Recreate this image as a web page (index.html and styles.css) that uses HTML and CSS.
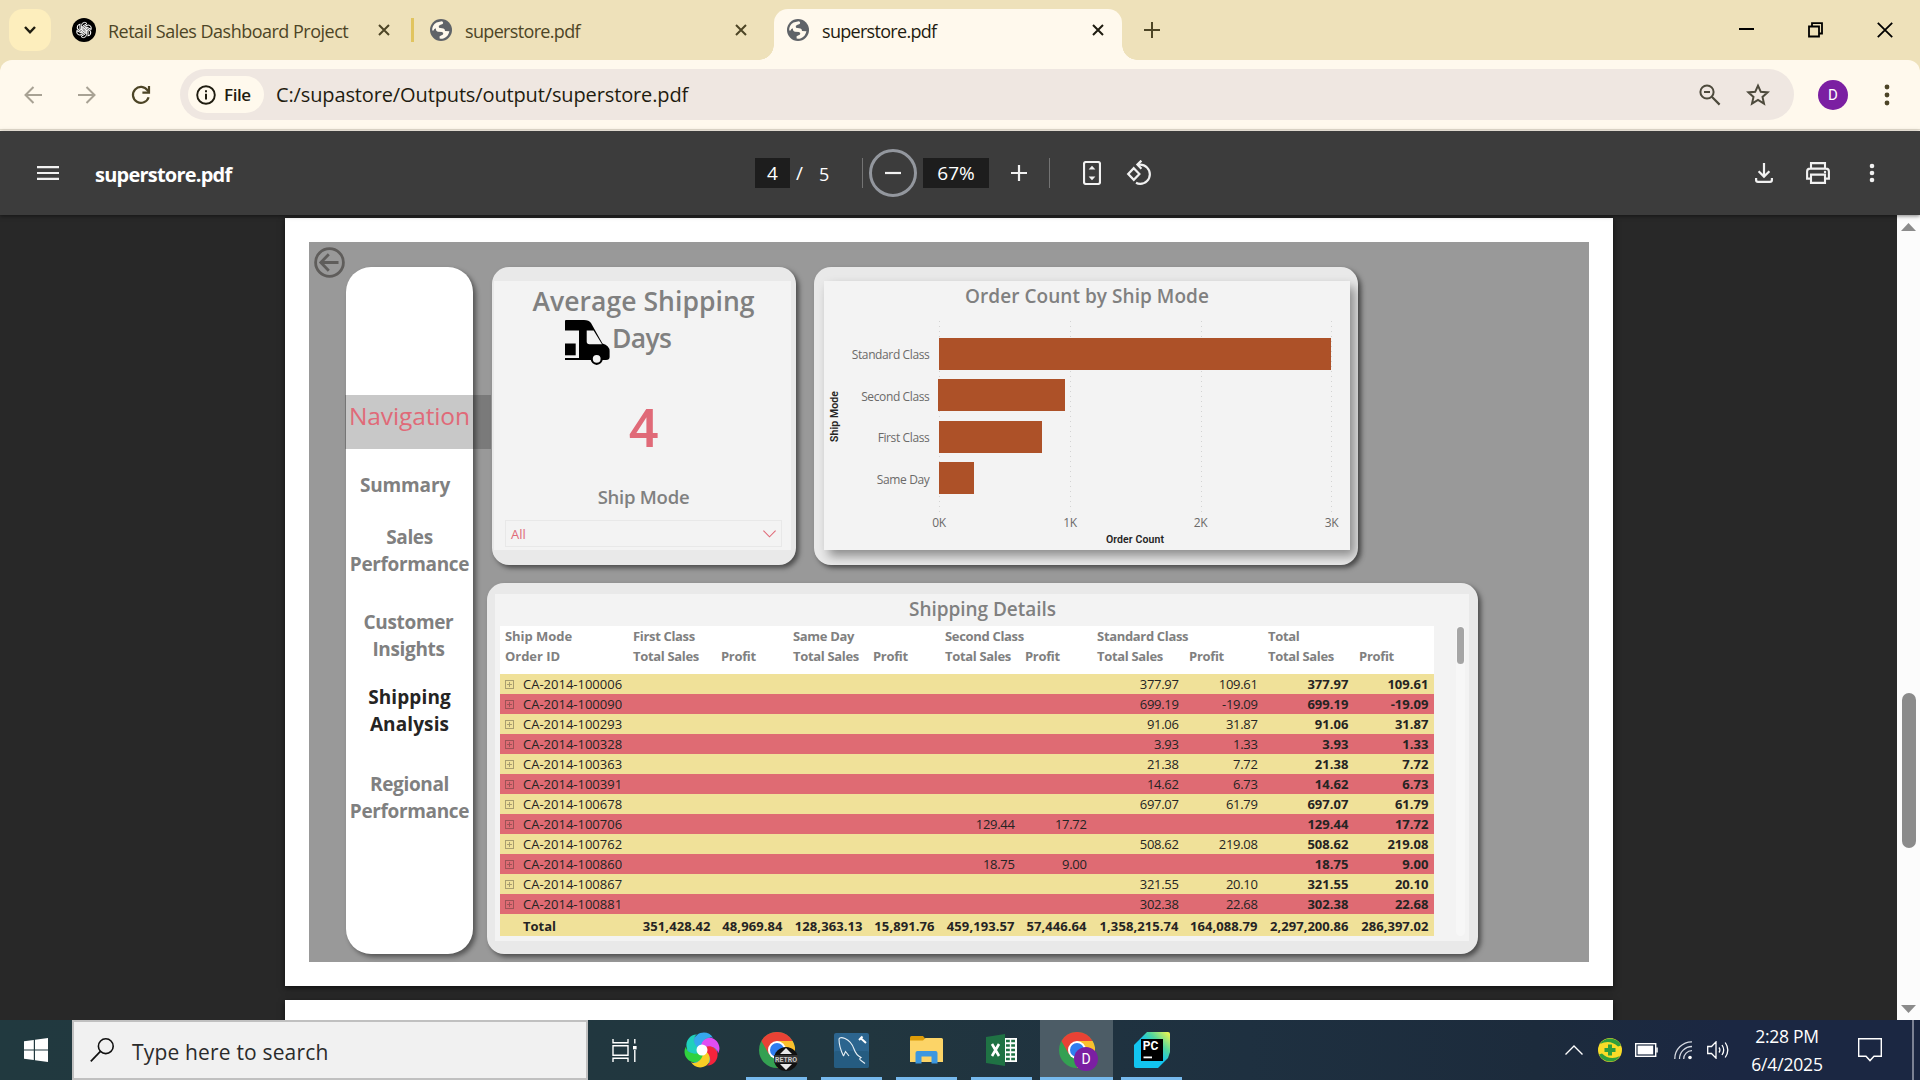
FILE: index.html
```html
<!DOCTYPE html>
<html lang="en">
<head>
<meta charset="utf-8">
<title>superstore.pdf</title>
<link rel="stylesheet" href="styles.css">
</head>
<body>
<svg class="defs" width="0" height="0" aria-hidden="true">
  <defs>
    <symbol id="globe" viewBox="0 0 22 22"><circle cx="11" cy="11" r="11" fill="#5f6368"/><path class="land" d="M2.2 11.6Q1.800 6.500 6.500 3.600L11.800 2.200Q14 3.200 12.600 5L10 6Q8 6.800 9 8.800L13.500 9.400Q15.200 10 15 12L19.400 12.200Q18.600 17 14 19.200Q11.600 20 9.600 19.600V17.200L13 15.600Q14 13.600 12 13L8 12.800Q5.400 12 6 9.600Q4 9.400 3.600 11.600Z"/></symbol>
    <symbol id="chrome" viewBox="0 0 36 36"><circle cx="18" cy="18" r="18" fill="#34a052"/><path d="M18 9H33.6A18 18 0 0 1 18 36L25.8 22.5Z" fill="#fbc02d"/><path d="M2.4 9L10.2 22.5L18 18V9H33.6A18 18 0 0 0 2.4 9Z" fill="#e94235"/><circle cx="18" cy="18" r="9" fill="#fff"/><circle cx="18" cy="18" r="7" fill="#2f7df0"/></symbol>
    <symbol id="close" viewBox="0 0 12 12"><path d="M1 1L11 11M11 1L1 11" stroke="currentColor" stroke-width="2" fill="none"/></symbol>
  </defs>
</svg>

<header class="tabstrip">
  <div class="tab-search"><svg width="14" height="10" viewBox="0 0 14 10"><path d="M2 2L7 7.3L12 2" fill="none" stroke="#1f1c10" stroke-width="2.4"/></svg></div>
  <div class="tab tab-first">
    <svg class="favicon" width="24" height="24" viewBox="0 0 24 24"><circle cx="12" cy="12" r="12" fill="#000"/><g fill="none" stroke="#fff" stroke-width="1"><path id="petal" d="M9.4 12.2V7.6Q9.6 4.6 12.4 4.4Q14 4.4 15 5.6L10.8 8V12.8"/><use href="#petal" transform="rotate(60 12 12)"/><use href="#petal" transform="rotate(120 12 12)"/><use href="#petal" transform="rotate(180 12 12)"/><use href="#petal" transform="rotate(240 12 12)"/><use href="#petal" transform="rotate(300 12 12)"/></g></svg>
    <span class="tab-title">Retail Sales Dashboard Project</span>
    <svg class="tab-close" width="12" height="12"><use href="#close"/></svg>
  </div>
  <div class="tab-divider"></div>
  <div class="tab tab-second">
    <svg class="favicon" width="22" height="22"><use href="#globe"/></svg>
    <span class="tab-title">superstore.pdf</span>
    <svg class="tab-close" width="12" height="12"><use href="#close"/></svg>
  </div>
  <div class="tab tab-active">
    <svg class="favicon" width="22" height="22"><use href="#globe"/></svg>
    <span class="tab-title">superstore.pdf</span>
    <svg class="tab-close" width="12" height="12"><use href="#close"/></svg>
  </div>
  <svg class="new-tab" width="16" height="16" viewBox="0 0 16 16"><path d="M8 0V16M0 8H16" stroke="#4d4526" stroke-width="2"/></svg>
  <div class="window-controls">
    <svg width="15" height="16" viewBox="0 0 15 16"><path d="M0 7H15" stroke="#000" stroke-width="2"/></svg>
    <svg width="15" height="16" viewBox="0 0 15 16"><path d="M1 4.5H11V14.5H1ZM4 4V1.2H14V11.5H11.5" fill="none" stroke="#000" stroke-width="1.8"/></svg>
    <svg width="16" height="16" viewBox="0 0 16 16"><path d="M.8 .8L15.2 15.2M15.2 .8L.8 15.2" stroke="#000" stroke-width="1.8"/></svg>
  </div>
</header>

<nav class="toolbar">
  <svg class="nav-back" width="18" height="18" viewBox="0 0 18 18"><path d="M18 9H1.5M9.5 1L1.5 9L9.5 17" fill="none" stroke="#a8a294" stroke-width="2"/></svg>
  <svg class="nav-forward" width="18" height="18" viewBox="0 0 18 18"><path d="M0 9H16.5M8.5 1L16.5 9L8.5 17" fill="none" stroke="#a8a294" stroke-width="2"/></svg>
  <svg class="nav-reload" width="20" height="20" viewBox="0 0 20 20"><path d="M17.6 12.2A8 8 0 1 1 16.6 5.4L18 7" fill="none" stroke="#4d4526" stroke-width="2.2"/><path d="M18 1V7.6H11.4" fill="none" stroke="#4d4526" stroke-width="2.2"/></svg>
  <div class="omnibox">
    <div class="file-chip">
      <svg width="20" height="20" viewBox="0 0 20 20"><circle cx="10" cy="10" r="8.8" fill="none" stroke="#1f1c10" stroke-width="1.9"/><path d="M10 8.8V14.6M10 5.2V7.2" stroke="#1f1c10" stroke-width="2"/></svg>
      <span>File</span>
    </div>
    <span class="url">C:/supastore/Outputs/output/superstore.pdf</span>
    <svg class="zoom-icon" width="22" height="22" viewBox="0 0 22 22"><circle cx="8" cy="8" r="6.6" fill="none" stroke="#4d4a3c" stroke-width="2"/><path d="M12.8 12.8L20.6 20.6M5 8H11" stroke="#4d4a3c" stroke-width="2.2"/></svg>
    <svg class="star-icon" width="24" height="23" viewBox="0 0 24 23"><path d="M12 2.6L14.8 8.8L21.6 9.4L16.5 13.9L18 20.6L12 17L6 20.6L7.5 13.9L2.4 9.4L9.2 8.8Z" fill="none" stroke="#4d4a3c" stroke-width="2"/></svg>
  </div>
  <div class="avatar">D</div>
  <svg class="menu-dots" width="6" height="26" viewBox="0 0 6 26"><g fill="#4d4526"><circle cx="3" cy="5" r="2.4"/><circle cx="3" cy="13" r="2.4"/><circle cx="3" cy="21" r="2.4"/></g></svg>
</nav>

<section class="pdfbar">
  <svg class="hamburger" width="22" height="14" viewBox="0 0 22 14"><path d="M0 1.2H22M0 7H22M0 12.8H22" stroke="#f1f1f1" stroke-width="2.2"/></svg>
  <span class="pdf-title">superstore.pdf</span>
  <div class="pdf-controls">
    <span class="page-box">4</span><span class="slash">/</span><span class="page-total">5</span>
    <span class="rule"></span>
    <span class="zoom-out"><svg width="16" height="4" viewBox="0 0 16 4"><path d="M0 2H16" stroke="#f1f1f1" stroke-width="2.2"/></svg></span>
    <span class="zoom-level">67%</span>
    <svg class="zoom-in" width="16" height="16" viewBox="0 0 16 16"><path d="M8 0V16M0 8H16" stroke="#f1f1f1" stroke-width="2.2"/></svg>
    <span class="rule"></span>
    <svg class="fit" width="18" height="24" viewBox="0 0 18 24"><rect x="1" y="1" width="16" height="22" rx="2" fill="none" stroke="#f1f1f1" stroke-width="2.2"/><path d="M9 4.8L12.4 8.6H5.6ZM9 19.2L12.4 15.4H5.6Z" fill="#f1f1f1"/></svg>
    <svg class="rotate" width="26" height="26" viewBox="0 0 26 26"><path d="M7.8 8.2L13.4 14L7.8 19.8L2.2 14Z" fill="none" stroke="#f1f1f1" stroke-width="2.2"/><path d="M11.6 4.6H14.2A9.6 9.6 0 0 1 14.2 23.9Q12 23.9 10 22.8" fill="none" stroke="#f1f1f1" stroke-width="2.2"/><path d="M15.4 .6L11.4 4.6L15.4 8.8" fill="none" stroke="#f1f1f1" stroke-width="2.2"/></svg>
  </div>
  <div class="pdf-actions">
    <svg width="18" height="20" viewBox="0 0 18 20"><path d="M9 0V13M3.6 8.2L9 13.6L14.4 8.2M1.1 15V17Q1.1 18.9 3 18.9H15Q16.9 18.9 16.9 17V15" fill="none" stroke="#f1f1f1" stroke-width="2.2"/></svg>
    <svg width="24" height="22" viewBox="0 0 24 22"><path d="M5 6.4V1.1H19V6.4M5 16.6H1.1V9.6Q1.1 6.6 4 6.6H20Q22.9 6.6 22.9 9.6V16.6H19M5 12.6H19V20.9H5Z" fill="none" stroke="#f1f1f1" stroke-width="2.1"/><circle cx="19" cy="10" r="1.2" fill="#f1f1f1"/></svg>
    <svg width="6" height="20" viewBox="0 0 6 20"><g fill="#f1f1f1"><circle cx="3" cy="3" r="2.3"/><circle cx="3" cy="10" r="2.3"/><circle cx="3" cy="17" r="2.3"/></g></svg>
  </div>
</section>

<main class="viewer">
  <div class="pages">
    <article class="page">
      <div class="report">
        <svg class="back" width="31" height="31" viewBox="0 0 31 31"><circle cx="15.5" cy="15.5" r="13.9" fill="none" stroke="#5f5d5b" stroke-width="2.8"/><path d="M24.5 15.5H7.5M14.8 7.2L6.8 15.5L14.8 23.8" fill="none" stroke="#5f5d5b" stroke-width="2.8"/></svg>
        <aside class="sidebar">
          <div class="nav-head">Navigation</div>
          <a class="nav-item summary">Summary</a>
          <a class="nav-item sales">Sales<br>Performance</a>
          <a class="nav-item customer">Customer<br>Insights</a>
          <a class="nav-item current">Shipping<br>Analysis</a>
          <a class="nav-item regional">Regional<br>Performance</a>
        </aside>
        <div class="content">
          <div class="top-row">
            <section class="card ship-days">
              <div class="panel">
                <h2 class="days-title">Average Shipping<span class="days-line"><svg width="45" height="45" viewBox="0 0 45 45"><path fill-rule="evenodd" d="M0 1Q0 0 1 0H19Q24 0 26 3L37.5 23.6Q44.6 26 44.6 31V37Q44.6 40 41 40H0V38H14V10.5H0ZM21.7 10.5V21.5Q21.7 24.2 24.5 24.2H37L28.600 10.5Z"/><rect y="23.5" width="10.7" height="11.8"/><circle cx="31.7" cy="38.8" r="5" fill="#f3f3f3" stroke="#000" stroke-width="2.2"/></svg><span class="days-word">Days</span></span></h2>
                <div class="days-value">4</div>
                <h3 class="filter-title">Ship Mode</h3>
                <div class="dropdown"><span>All</span><svg width="13" height="8" viewBox="0 0 13 8"><path d="M.4 .6L6.5 6.8L12.6 .6" fill="none" stroke="#e06a78" stroke-width="1.1"/></svg></div>
              </div>
            </section>
            <section class="card orders">
              <div class="panel">
                <h2 class="chart-title">Order Count by Ship Mode</h2>
                <svg class="chart" width="526" height="233" viewBox="0 0 526 233">
                  <g stroke="#d3d3d3" stroke-width="1" stroke-dasharray="1 4"><path d="M115.5 4V196M246.5 4V196M377.5 4V196M507.5 4V196"/></g>
                  <g fill="#ad5128"><rect x="115" y="21" width="392" height="32"/><rect x="114" y="62" width="127" height="32"/><rect x="115" y="104" width="103" height="32"/><rect x="115" y="145" width="35" height="32"/></g>
                  <g class="axis" text-anchor="end"><text x="105.4" y="42">Standard Class</text><text x="105.4" y="83.500">Second Class</text><text x="105.4" y="124.500">First Class</text><text x="105.4" y="166.500">Same Day</text></g>
                  <g class="axis" text-anchor="middle"><text x="115" y="210">0K</text><text x="246" y="210">1K</text><text x="376.500" y="210">2K</text><text x="507.5" y="210">3K</text></g>
                  <g class="axis-title" text-anchor="middle"><text x="311" y="226">Order Count</text><text transform="translate(14 99.5) rotate(-90)">Ship Mode</text></g>
                </svg>
              </div>
            </section>
          </div>
          <section class="card details">
            <div class="panel">
              <h2 class="details-title">Shipping Details</h2>
              <div class="matrix-wrap">
              <table class="matrix">
                <colgroup><col class="c0"><col class="c1"><col class="c2"><col class="c3"><col class="c2"><col class="c3"><col class="c2"><col class="c4"><col class="c5"><col class="c6"><col class="c3"></colgroup>
                <thead>
                  <tr><th>Ship Mode</th><th colspan="2">First Class</th><th colspan="2">Same Day</th><th colspan="2">Second Class</th><th colspan="2">Standard Class</th><th colspan="2">Total</th></tr>
                  <tr><th>Order ID</th><th>Total Sales</th><th>Profit</th><th>Total Sales</th><th>Profit</th><th>Total Sales</th><th>Profit</th><th>Total Sales</th><th>Profit</th><th>Total Sales</th><th>Profit</th></tr>
                </thead>
                <tbody>
                  <tr><td><i></i>CA-2014-100006</td><td></td><td></td><td></td><td></td><td></td><td></td><td>377.97</td><td>109.61</td><td>377.97</td><td>109.61</td></tr>
                  <tr><td><i></i>CA-2014-100090</td><td></td><td></td><td></td><td></td><td></td><td></td><td>699.19</td><td>-19.09</td><td>699.19</td><td>-19.09</td></tr>
                  <tr><td><i></i>CA-2014-100293</td><td></td><td></td><td></td><td></td><td></td><td></td><td>91.06</td><td>31.87</td><td>91.06</td><td>31.87</td></tr>
                  <tr><td><i></i>CA-2014-100328</td><td></td><td></td><td></td><td></td><td></td><td></td><td>3.93</td><td>1.33</td><td>3.93</td><td>1.33</td></tr>
                  <tr><td><i></i>CA-2014-100363</td><td></td><td></td><td></td><td></td><td></td><td></td><td>21.38</td><td>7.72</td><td>21.38</td><td>7.72</td></tr>
                  <tr><td><i></i>CA-2014-100391</td><td></td><td></td><td></td><td></td><td></td><td></td><td>14.62</td><td>6.73</td><td>14.62</td><td>6.73</td></tr>
                  <tr><td><i></i>CA-2014-100678</td><td></td><td></td><td></td><td></td><td></td><td></td><td>697.07</td><td>61.79</td><td>697.07</td><td>61.79</td></tr>
                  <tr><td><i></i>CA-2014-100706</td><td></td><td></td><td></td><td></td><td>129.44</td><td>17.72</td><td></td><td></td><td>129.44</td><td>17.72</td></tr>
                  <tr><td><i></i>CA-2014-100762</td><td></td><td></td><td></td><td></td><td></td><td></td><td>508.62</td><td>219.08</td><td>508.62</td><td>219.08</td></tr>
                  <tr><td><i></i>CA-2014-100860</td><td></td><td></td><td></td><td></td><td>18.75</td><td>9.00</td><td></td><td></td><td>18.75</td><td>9.00</td></tr>
                  <tr><td><i></i>CA-2014-100867</td><td></td><td></td><td></td><td></td><td></td><td></td><td>321.55</td><td>20.10</td><td>321.55</td><td>20.10</td></tr>
                  <tr><td><i></i>CA-2014-100881</td><td></td><td></td><td></td><td></td><td></td><td></td><td>302.38</td><td>22.68</td><td>302.38</td><td>22.68</td></tr>
                </tbody>
                <tfoot><tr><td>Total</td><td>351,428.42</td><td>48,969.84</td><td>128,363.13</td><td>15,891.76</td><td>459,193.57</td><td>57,446.64</td><td>1,358,215.74</td><td>164,088.79</td><td>2,297,200.86</td><td>286,397.02</td></tr></tfoot>
              </table>
              <div class="matrix-scroll"><div class="matrix-thumb"></div></div>
              </div>
            </div>
          </section>
        </div>
      </div>
    </article>
    <article class="page next-page"></article>
  </div>
  <div class="scrollbar">
    <svg width="15" height="8" viewBox="0 0 15 8"><path d="M7.5 0L15 8H0Z" fill="#8b8b8b"/></svg>
    <div class="scroll-thumb"></div>
    <svg width="15" height="8" viewBox="0 0 15 8"><path d="M7.5 8L15 0H0Z" fill="#8b8b8b"/></svg>
  </div>
</main>

<footer class="taskbar">
  <div class="start"><svg width="24" height="24" viewBox="0 0 24 24"><path d="M0 3.3L9.8 2V11.4H0ZM11 1.8L24 0V11.4H11ZM0 12.6H9.8V22L0 20.7ZM11 12.6H24V24L11 22.2Z" fill="#fff"/></svg></div>
  <div class="search">
    <svg width="24" height="24" viewBox="0 0 24 24"><circle cx="15.8" cy="8.2" r="7.4" fill="none" stroke="#111" stroke-width="1.6"/><path d="M10.4 13.4L.8 23.4" stroke="#111" stroke-width="1.7"/></svg>
    <span>Type here to search</span>
  </div>
  <div class="apps">
    <div class="app task-view"><svg width="25" height="23" viewBox="0 0 25 23"><path d="M1 0V3.7H16V0M1 23V19.3H16V23M1 6.7H16V16.3H1ZM22.8 0V4.5M22.8 11V23" fill="none" stroke="#fff" stroke-width="1.4"/><rect x="21" y="7" width="3.6" height="3.4" fill="#fff"/></svg></div>
    <div class="app swirl"><svg width="36" height="36" viewBox="0 0 36 36"><defs><path id="blade" d="M18 18C10 17 8 8 13 3C18 -1 26 0 29 6C24 3 17 7 18 18Z"/></defs><circle cx="18" cy="18" r="15" fill="#3ba8c8"/><use href="#blade" fill="#35a8ee"/><use href="#blade" fill="#e04df4" transform="rotate(60 18 18)"/><use href="#blade" fill="#f5233c" transform="rotate(120 18 18)"/><use href="#blade" fill="#f9cf25" transform="rotate(180 18 18)"/><use href="#blade" fill="#2fd23e" transform="rotate(240 18 18)"/><use href="#blade" fill="#1fd0bc" transform="rotate(300 18 18)"/><circle cx="18" cy="18" r="5.500" fill="#fff"/></svg></div>
    <div class="app running">
      <svg width="36" height="36"><use href="#chrome"/></svg>
      <svg class="badge" width="24" height="24" viewBox="0 0 24 24"><circle cx="12" cy="12" r="12" fill="#111"/><path d="M12 1L18 7H6ZM12 23L18 17H6Z" fill="#e8e8e8"/><rect y="8" width="24" height="8" fill="#333"/><text x="12" y="14.500" text-anchor="middle" class="badge-text">RETRO</text></svg>
    </div>
    <div class="app running"><svg width="35" height="35" viewBox="0 0 35 35"><rect width="35" height="35" rx="2" fill="#2c658f"/><rect y="18" width="35" height="17" rx="2" fill="#225678" opacity=".6"/><path d="M9.5 23Q5 14 5 6Q6 3.5 11 5.5Q17.5 8.5 20 16Q22 22 27 24.5Q24.500 26 27 27.500L31 30.500M9.500 23L11.500 18.500L15 23" fill="none" stroke="#e8f0f5" stroke-width="1.1"/><path d="M26 4.500L32 10M25 7L28.500 3.500" stroke="#fff" stroke-width="2"/></svg></div>
    <div class="app running"><svg width="33" height="28" viewBox="0 0 33 28"><path d="M0 1.5Q0 0 1.5 0H13L15.5 3V7H0Z" fill="#dd9c08"/><path d="M0 4.5H13L15.5 2H31.5Q33 2 33 3.5V26H0Z" fill="#fcd467"/><path d="M5.5 27.5V17Q5.5 15 7.5 15H25.5Q27.5 15 27.5 17V27.5H21.5V20.5H11.5V27.5Z" fill="#3c97e0"/></svg></div>
    <div class="app running"><svg width="31" height="32" viewBox="0 0 31 32"><rect x="17" y="4" width="14" height="24" fill="#fff"/><path d="M20 7H29M20 11.5H29M20 16H29M20 20.5H29M20 25H29" stroke="#1f7244" stroke-width="2.6"/><path d="M24.5 4V28" stroke="#fff" stroke-width="1.4"/><path d="M0 3L19 0V32L0 29Z" fill="#1f7244"/><path d="M6 10L13 22M13 10L6 22" stroke="#fff" stroke-width="2.6"/></svg></div>
    <div class="app running active">
      <svg width="36" height="36"><use href="#chrome"/></svg>
      <span class="badge badge-d">D</span>
    </div>
    <div class="app running"><svg width="36" height="36" viewBox="0 0 36 36"><defs><linearGradient id="pc" x1="0" y1="1" x2="1" y2="0"><stop offset=".5" stop-color="#12c4f0"/><stop offset=".7" stop-color="#4fd6a0"/><stop offset="1" stop-color="#fcf84a"/></linearGradient></defs><path d="M13 0H34Q36 0 36 2V20L34 26L24 36H2Q0 36 0 34V13L5 8Z" fill="url(#pc)"/><rect x="7" y="7" width="22" height="22" fill="#000"/><rect x="9.5" y="24.5" width="8.5" height="1.8" fill="#fff"/><text x="8.8" y="17.5" class="pc-text">PC</text></svg></div>
  </div>
  <div class="tray">
    <svg class="t-up" width="18" height="10" viewBox="0 0 18 10"><path d="M.5 9.5L9 1L17.5 9.5" fill="none" stroke="#fff" stroke-width="1.4"/></svg>
    <svg class="t-shield" width="24" height="24" viewBox="0 0 24 24"><circle cx="12" cy="12" r="12" fill="#f9dc28"/><path d="M2 6A12 12 0 0 1 23 7.5L20 8.5Q12 1 2 6ZM22 18A12 12 0 0 1 1 16.5L4 15.5Q12 23 22 18Z" fill="#2f9e3c"/><path d="M12 6.5V17.500M6.5 12H17.500" stroke="#2f9e3c" stroke-width="4"/></svg>
    <svg class="t-batt" width="23" height="14" viewBox="0 0 23 14"><rect x=".7" y=".7" width="20" height="12.6" fill="none" stroke="#fff" stroke-width="1.4"/><rect x="2.6" y="2.6" width="15.6" height="8.8" fill="#fff"/><path d="M22 4.5V9.5" stroke="#fff" stroke-width="1.5"/></svg>
    <svg class="t-wifi" width="18" height="19" viewBox="0 0 18 19"><g fill="none" stroke="#d6dae2" stroke-width="1.3"><path d="M.8 18A17 17 0 0 1 18 .8M5.5 18A12.5 12.5 0 0 1 18 5.5M9.7 18A8.2 8.2 0 0 1 18 9.7"/></g><circle cx="16" cy="16.5" r="1.8" fill="#fff"/></svg>
    <svg class="t-vol" width="23" height="18" viewBox="0 0 23 18"><path d="M.7 5.5H4.5L9 .9V17.1L4.5 12.5H.7ZM12 6.5Q13.8 9 12 11.5M15 4Q18.4 9 15 14M18.2 1.5Q23.4 9 18.2 16.5" fill="none" stroke="#fff" stroke-width="1.3"/></svg>
    <div class="clock"><div class="time">2:28 PM</div><div class="date">6/4/2025</div></div>
    <svg class="t-note" width="24" height="24" viewBox="0 0 24 24"><path d="M.7 .7H23.3V18.3H16L12 22.6L8 18.3H.7Z" fill="none" stroke="#fff" stroke-width="1.4"/></svg>
    <div class="show-desktop"></div>
  </div>
</footer>
</body>
</html>
```
FILE: styles.css
```css
* { box-sizing: border-box; }
html, body { margin: 0; height: 100%; }
body {
  width: 1920px; height: 1080px; overflow: hidden;
  display: flex; flex-direction: column;
  font-family: "Open Sans", "Noto Sans", sans-serif;
  background: #282828;
}
.defs { position: absolute; }
svg { display: block; flex: none; }
h2, h3 { margin: 0; font-weight: 600; }

/* Tab strip */
.tabstrip { flex: none; height: 60px; background: #eee1ba; display: flex; align-items: flex-start; padding-left: 9px; color: #4d4526; }
.tab-search { width: 42px; height: 42px; margin-top: 9px; border-radius: 14px; background: #fdeebd; display: grid; place-items: center; }
.tab { display: flex; align-items: center; height: 51px; margin-top: 9px; padding-bottom: 9px; font-size: 18px; line-height: 24px; letter-spacing: -.51px; }
.tab-title { flex: 1; margin-left: 12px; padding-top: 1px; white-space: nowrap; }
.land { fill: #fff9ed; }
.tab-first { width: 339px; padding-left: 21px; }
.tab-divider { width: 3px; height: 24px; margin: 18px 0 0 21px; background: #e1c45f; }
.tab-second { width: 333px; padding-left: 16px; letter-spacing: -.66px; }
.tab-second .tab-title, .tab-active .tab-title { margin-left: 13px; }
.tab-active { position: relative; width: 348px; margin-left: 27px; padding: 0 18px 9px 13px; background: #fff9ed; border-radius: 14px 14px 0 0; color: #1f1c10; letter-spacing: -.7px; }
.tab-active::before, .tab-active::after { content: ""; position: absolute; bottom: 0; width: 15px; height: 15px; }
.tab-active::before { left: -15px; background: radial-gradient(circle at 0 0, transparent 14.5px, #fff9ed 15px); }
.tab-active::after { right: -15px; background: radial-gradient(circle at 100% 0, transparent 14.5px, #fff9ed 15px); }
.new-tab { margin: 22px 0 0 22px; }
.window-controls { display: flex; gap: 54px; margin: 22px 27px 0 auto; }

/* Address bar */
.toolbar { flex: none; height: 71px; background: #fff9ed; border-bottom: 1px solid #fff9ed; box-shadow: inset 0 -1px #e6dfd0; display: flex; align-items: flex-start; border-radius: 12px 12px 0 0; position: relative; }
.toolbar::before { content: ""; position: absolute; z-index: -1; left: 0; right: 0; top: 0; height: 14px; background: #eee1ba; }
.nav-back { margin: 26px 0 0 24px; }
.nav-forward { margin: 26px 0 0 36px; }
.nav-reload { margin: 25px 0 0 35px; }
.omnibox { width: 1614px; height: 51px; margin: 9px 0 0 29px; padding: 0 24px 0 8px; border-radius: 26px; background: #efe7e1; display: flex; align-items: center; }
.file-chip { width: 76px; height: 37px; border-radius: 19px; background: #fff9ed; display: flex; align-items: center; padding-left: 8px; gap: 8px; font-size: 17px; font-weight: 600; letter-spacing: -.4px; color: #1f1c10; }
.url { flex: 1; margin-left: 12px; font-size: 20px; letter-spacing: -.13px; color: #1f1c10; }
.star-icon { margin-left: 25px; }
.avatar { width: 30px; height: 30px; margin: 20px 0 0 24px; border-radius: 50%; background: #7b1fa2; color: #fff; font: 15px/30px Roboto, sans-serif; text-align: center; }
.menu-dots { margin: 22px 0 0 36px; }

/* PDF toolbar */
.pdfbar { flex: none; height: 84px; background: #3c3c3c; color: #fff; display: flex; align-items: center; box-shadow: 0 1px 4px rgba(0,0,0,.5); position: relative; }
.hamburger { margin: 0 0 0 37px; }
.pdf-title { width: 659px; margin: 3px 0 0 36px; font-size: 20px; font-weight: 700; letter-spacing: -.78px; }
.pdf-controls { display: flex; align-items: center; margin-left: 1px; font-size: 19px; line-height: 30px; }
.page-box { width: 35px; height: 30px; background: #1d1d1d; text-align: center; }
.slash { width: 23px; margin-left: 6px; }
.page-total { width: 51px; font-size: 18px; margin-left: -1px; padding-left: 1px; padding-top: 1px; }
.rule { width: 1px; height: 30px; background: #737373; margin-right: 6px; margin-left: -7px; }
.zoom-out { width: 48px; height: 48px; border: 3px solid #93979e; border-radius: 50%; display: grid; place-items: center; }
.zoom-level { width: 66px; height: 30px; margin: 0 22px 0 6px; background: #1d1d1d; text-align: center; }
.zoom-in + .rule { margin: 0 33px 0 22px; }
.rotate { margin-left: 25px; }
.pdf-actions { display: flex; align-items: center; gap: 33px; margin: 0 45px 0 auto; }
.pdf-actions svg:last-child { margin-left: 6px; }

/* Viewer */
.viewer { flex: 1; min-height: 0; display: flex; overflow: hidden; }
.pages { width: 1897px; padding: 3px 0 0 285px; }
.page { width: 1328px; height: 768px; padding: 24px; background: #fff; box-shadow: 0 2px 6px rgba(0,0,0,.6); }
.next-page { margin-top: 14px; height: 60px; }
.scrollbar { width: 23px; background: #fcfcfc; display: flex; flex-direction: column; align-items: center; padding: 8px 0 7px; }
.scroll-thumb { width: 14px; height: 155px; margin: 462px 0 auto; border-radius: 7px; background: #8b8b8b; }

/* Report */
.report { position: relative; width: 1280px; height: 720px; background: #999; padding: 25px 0 0 36px; display: flex; }
.back { position: absolute; left: 5px; top: 5px; }
.sidebar { width: 127px; height: 687px; margin-left: 1px; padding-top: 128px; background: #fff; border-radius: 25px; box-shadow: 3px 3px 5px rgba(0,0,0,.45); display: flex; flex-direction: column; align-items: center; }
.nav-head { align-self: flex-start; width: 146px; height: 54px; margin-left: -1px; padding-left: 4px; background: rgba(30,30,28,.245); color: #e06a78; font-size: 24.5px; line-height: 41px; letter-spacing: -.12px; white-space: nowrap; }
.nav-item { color: #808080; font-size: 19px; font-weight: 700; line-height: 27px; text-align: center; letter-spacing: -.35px; white-space: nowrap; }
.summary { margin: 23px 9px 0 0; letter-spacing: -.15px; }
.sales { margin-top: 25px; }
.customer { margin: 31px 2px 0 0; letter-spacing: -.35px; }
.current { margin-top: 21px; color: #252423; letter-spacing: .1px; }
.regional { margin-top: 33px; }
.content { margin-left: 19px; }
.top-row { display: flex; gap: 17px; }
.card { background: #e9e9e9; border-radius: 17px; box-shadow: 3px 3px 5px rgba(0,0,0,.5); }
.panel { background: #f3f3f3; }
.card h2, .card h3 { color: #808080; }
.ship-days { width: 304px; height: 298px; margin-right: 1px; padding: 14px 5px 0 2px; }
.ship-days .panel { height: 269px; padding: 2px 9px 0 11px; text-align: center; }
.days-title { font-size: 26.5px; line-height: 37px; letter-spacing: .05px; }
.days-line { display: flex; justify-content: flex-start; gap: 2px; padding-left: 60px; letter-spacing: -.7px; }
.days-value { height: 68px; margin-top: 30px; color: #e06a78; font: 500 54px/68px Roboto, sans-serif; }
.filter-title { margin-top: 21px; font-size: 18.5px; line-height: 26px; letter-spacing: -.25px; }
.dropdown { height: 27px; margin-top: 10px; padding: 0 5px; border: 1px solid #e8e8e8; display: flex; align-items: center; justify-content: space-between; color: #e06a78; font-size: 13px; }
.orders { width: 544px; height: 298px; padding: 14px 8px 0 10px; }
.orders .panel { height: 269px; box-shadow: 5px 6px 10px rgba(0,0,0,.4); }
.chart-title { height: 36px; padding-top: 1px; text-align: center; font-size: 19px; line-height: 28px; letter-spacing: .05px; }
.axis { font-size: 12px; letter-spacing: -.38px; fill: #6b6a69; }
.axis-title { font: 600 10.5px "DejaVu Sans Condensed", Roboto, sans-serif; font-family: Roboto, sans-serif; fill: #252423; letter-spacing: .1px; }
.details { width: 991px; height: 371px; margin: 18px 0 0 -5px; padding: 11px 9px 0 8px; }
.details .panel { height: 347px; padding: 0 4px 0 5px; }
.details-title { height: 32px; padding-top: 1px; text-align: center; font-size: 19px; line-height: 29px; letter-spacing: -.05px; }
.matrix-wrap { display: flex; justify-content: space-between; }
.matrix { width: 934px; table-layout: fixed; border-collapse: collapse; font-size: 13px; line-height: 20px; color: #252423; }
.c0 { width: 128px; } .c1 { width: 88px; } .c2 { width: 72px; } .c3 { width: 80px; } .c4 { width: 92px; } .c5 { width: 79px; } .c6 { width: 91px; }
.matrix th, .matrix td { height: 20px; padding: 0 5.5px 0 0; white-space: nowrap; overflow: visible; }
.matrix thead { background: #fff; border-bottom: 4px solid #fff; }
.matrix th { padding: 0 0 0 5px; text-align: left; font-weight: 700; color: #808080; letter-spacing: -.33px; }
.matrix th:first-child { letter-spacing: -.05px; }
.matrix thead tr:last-child th { height: 24px; padding-bottom: 4px; }
.matrix td { text-align: right; letter-spacing: -.3px; }
.matrix td:first-child { text-align: left; padding-left: 5px; letter-spacing: 0; }
.matrix td:nth-child(n+10) { font-weight: 700; letter-spacing: .05px; }
.matrix tbody tr:nth-child(odd) { background: #f0e199; }
.matrix tbody tr:nth-child(even) { background: #df6b73; }
.matrix tfoot { background: #f0e199; font-weight: 700; }
.matrix tfoot td { height: 22px; padding-top: 2px; letter-spacing: .08px; }
.matrix tfoot td:first-child { padding-left: 23px; }
.matrix i { display: inline-block; width: 9px; height: 9px; margin-right: 9px; opacity: .35; border: 1px solid #252423; background: linear-gradient(#252423, #252423) center / 5px 1px no-repeat, linear-gradient(#252423, #252423) center / 1px 5px no-repeat; }
.matrix-scroll { width: 9px; height: 310px; padding-left: 1px; border-radius: 5px; background: #f7f7f7; }
.matrix-thumb { width: 7px; height: 37px; margin-top: 1px; border-radius: 4px; background: #a5a5a5; }

/* Taskbar */
.taskbar { flex: none; height: 60px; display: flex; background: linear-gradient(90deg, #21393f 0, #21363f 45%, #1e3040 65%, #1c2b3c 80%, #1b2742 90%); position: relative; }
.start { width: 72px; display: grid; place-items: center; }
.search { width: 516px; border: 2px solid #c0c0c0; background: #f1f1f1; display: flex; align-items: center; padding-left: 16px; gap: 18px; font-size: 21px; letter-spacing: .17px; color: #2b2b2b; }
.search span { padding-top: 3px; }
.apps { display: flex; margin-left: 1px; }
.app { position: relative; width: 73px; margin: 0 1px; display: grid; place-items: center; }
.task-view svg { margin-left: -5px; }
.running { background: linear-gradient(#76b9ed, #76b9ed) center bottom / 61px 3px no-repeat; }
.active { background: linear-gradient(#76b9ed, #76b9ed) center bottom / 73px 3px no-repeat, #4c5c66; }
.badge { position: absolute; left: 34px; top: 27px; }
.badge-d { width: 24px; height: 24px; border-radius: 50%; background: #7b1fa2; color: #fff; font: 14px/24px Roboto, sans-serif; text-align: center; }
.badge-text { font: 700 7px Roboto, sans-serif; fill: #ccc; }
.pc-text { font: 700 12px Roboto, sans-serif; fill: #fff; }
.tray { display: flex; align-items: center; margin-left: auto; color: #fff; }
.t-shield { margin-left: 15px; }
.t-batt { margin-left: 13px; }
.t-wifi { margin-left: 16px; }
.t-vol { margin-left: 15px; }
.clock { width: 80px; margin-left: 17px; text-align: center; font-size: 17.5px; line-height: 28px; letter-spacing: -.15px; white-space: nowrap; }
.time { letter-spacing: -.25px; }
.t-note { margin-left: 31px; }
.show-desktop { width: 8px; height: 60px; margin-left: 30px; border-left: 2px solid #7b8294; }
```
